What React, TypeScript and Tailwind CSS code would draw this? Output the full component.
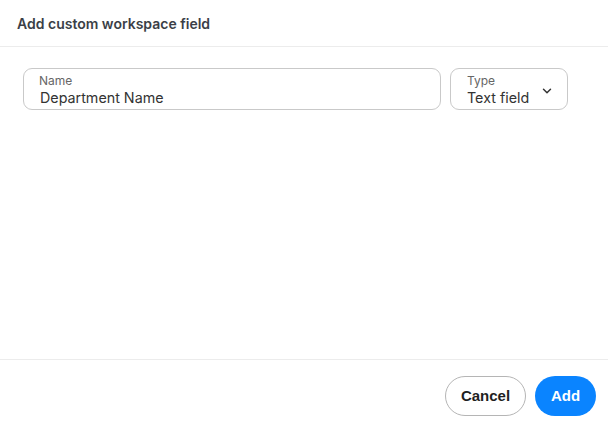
import { ChevronDown } from 'lucide-react';

export default function App() {
  return (
    <div className="flex h-[426px] w-[608px] flex-col bg-white font-['Inter',sans-serif]">
      <div className="flex h-[47px] items-center border-b border-[#ececec] px-[17px]">
        <h2 className="text-[14px] font-semibold text-[#3b3f47]">Add custom workspace field</h2>
      </div>

      <div className="flex flex-1 items-start gap-[9px] px-[23px] pt-[21px]">
        <label className="flex h-[42px] w-[418px] flex-col rounded-[9px] border border-[#c9c9c9] pl-[16px] pr-[15px] pt-[4px]">
          <span className="-ml-px text-[12px] leading-[15px] text-[#666]">Name</span>
          <span className="text-[14.3px] leading-[19px] text-[#333]">Department Name</span>
        </label>
        <div className="flex h-[42px] w-[118px] items-start justify-between rounded-[9px] border border-[#c9c9c9] pl-[16px] pr-[13px] pt-[4px]">
          <div className="flex flex-col">
            <span className="text-[12px] leading-[15px] text-[#666]">Type</span>
            <span className="text-[14.3px] leading-[19px] text-[#333]">Text field</span>
          </div>
          <ChevronDown className="mt-[11px] h-[14px] w-[14px] text-[#333]" strokeWidth={2.5} />
        </div>
      </div>

      <div className="flex h-[67px] items-start justify-end gap-[9px] border-t border-[#ececec] pr-[12px] pt-[16px] font-['Liberation_Sans',sans-serif]">
        <button className="h-[40px] w-[81px] rounded-full border border-[#b5b5b5] bg-white text-[15px] font-bold text-[#1f1f1f]">
          Cancel
        </button>
        <button className="h-[40px] w-[61px] rounded-full bg-[#0a84ff] text-[15px] font-bold text-white">
          Add
        </button>
      </div>
    </div>
  );
}
